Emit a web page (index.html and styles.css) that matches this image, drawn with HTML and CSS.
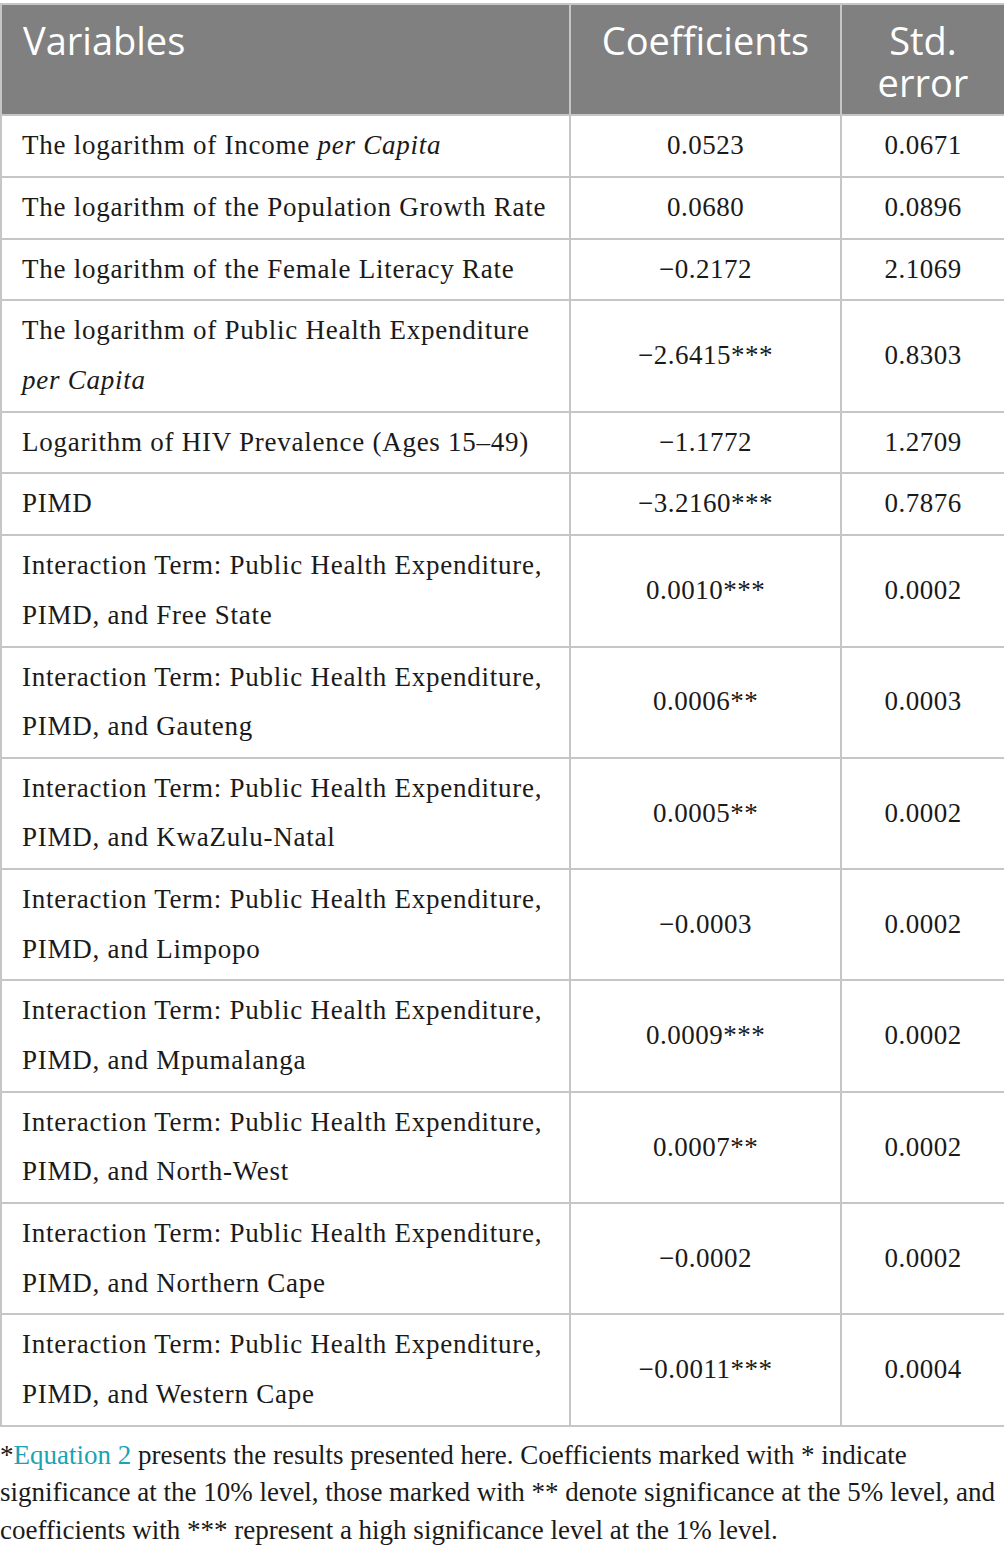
FILE: index.html
```html
<!DOCTYPE html>
<html>
<head>
<meta charset="utf-8">
<link rel="stylesheet" href="styles.css">
</head>
<body>
<table class="tbl">
  <colgroup>
    <col class="c1"><col class="c2"><col class="c3">
  </colgroup>
  <thead>
    <tr><th class="left">Variables</th><th>Coefficients</th><th>Std.<br>error</th></tr>
  </thead>
  <tbody>
    <tr><td class="left">The logarithm of Income <i>per Capita</i></td><td>0.0523</td><td>0.0671</td></tr>
    <tr><td class="left">The logarithm of the Population Growth Rate</td><td>0.0680</td><td>0.0896</td></tr>
    <tr><td class="left">The logarithm of the Female Literacy Rate</td><td>−0.2172</td><td>2.1069</td></tr>
    <tr><td class="left">The logarithm of Public Health Expenditure<br><i>per Capita</i></td><td>−2.6415***</td><td>0.8303</td></tr>
    <tr><td class="left">Logarithm of HIV Prevalence (Ages 15–49)</td><td>−1.1772</td><td>1.2709</td></tr>
    <tr><td class="left">PIMD</td><td>−3.2160***</td><td>0.7876</td></tr>
    <tr><td class="left">Interaction Term: Public Health Expenditure,<br>PIMD, and Free State</td><td>0.0010***</td><td>0.0002</td></tr>
    <tr><td class="left">Interaction Term: Public Health Expenditure,<br>PIMD, and Gauteng</td><td>0.0006**</td><td>0.0003</td></tr>
    <tr><td class="left">Interaction Term: Public Health Expenditure,<br>PIMD, and KwaZulu-Natal</td><td>0.0005**</td><td>0.0002</td></tr>
    <tr><td class="left">Interaction Term: Public Health Expenditure,<br>PIMD, and Limpopo</td><td>−0.0003</td><td>0.0002</td></tr>
    <tr><td class="left">Interaction Term: Public Health Expenditure,<br>PIMD, and Mpumalanga</td><td>0.0009***</td><td>0.0002</td></tr>
    <tr><td class="left">Interaction Term: Public Health Expenditure,<br>PIMD, and North-West</td><td>0.0007**</td><td>0.0002</td></tr>
    <tr><td class="left">Interaction Term: Public Health Expenditure,<br>PIMD, and Northern Cape</td><td>−0.0002</td><td>0.0002</td></tr>
    <tr><td class="left">Interaction Term: Public Health Expenditure,<br>PIMD, and Western Cape</td><td>−0.0011***</td><td>0.0004</td></tr>
  </tbody>
</table>
<p class="note">*<span class="ref">Equation 2</span> presents the results presented here. Coefficients marked with * indicate significance at the 10% level, those marked with ** denote significance at the 5% level, and coefficients with *** represent a high significance level at the 1% level.</p>
</body>
</html>
```
FILE: styles.css
```css
html, body {
  margin: 0;
  padding: 0;
  background: #ffffff;
}
body {
  padding-top: 3px;
  font-family: "Liberation Serif", "Times New Roman", serif;
  color: #1a1a1a;
}
.tbl {
  width: 1004px;
  border-collapse: collapse;
  table-layout: fixed;
  border: 2px solid #c6c6c6;
}
.c1 { width: 569px; }
.c2 { width: 271px; }
.c3 { width: 164px; }
.tbl th {
  background: #808080;
  color: #ffffff;
  font-family: "Open Sans", "Liberation Sans", sans-serif;
  font-weight: 400;
  font-size: 38px;
  line-height: 42px;
  vertical-align: top;
  text-align: center;
  padding: 14px 10px 11px;
  border: 2px solid #c6c6c6;
}
.tbl td {
  font-size: 27px;
  line-height: 49.5px;
  letter-spacing: 0.5px;
  padding: 5px 18px 5.3px;
  text-align: center;
  vertical-align: middle;
  border: 2px solid #c6c6c6;
}
.tbl td.left {
  letter-spacing: 0.75px;
}
.tbl .left {
  text-align: left;
  padding-left: 20px;
}
.tbl th.left {
  padding-left: 21px;
}
.tbl i {
  font-style: italic;
}
.note {
  margin: 10px 0 0;
  font-size: 27px;
  line-height: 37.5px;
  color: #1a1a1a;
}
.ref {
  color: #1aa3b4;
}
```
